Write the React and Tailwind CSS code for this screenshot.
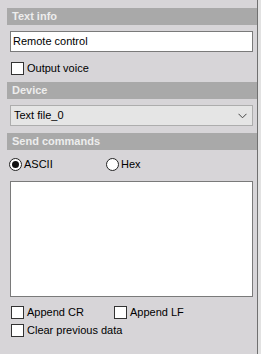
import React from 'react';

// Thanh tiêu đề của từng nhóm
function SectionHeader({ title }) {
  return (
    <div className="h-[17px] bg-[#a9a9a9] text-[#ededed] font-bold pl-[5px] flex items-center leading-none">
      {title}
    </div>
  );
}

function CheckBox({ label, className = '' }) {
  return (
    <div className={`flex items-center h-[13px] ${className}`}>
      <div className="w-[13px] h-[13px] border border-[#333333] bg-white shrink-0" />
      <span className="ml-[3px] leading-none">{label}</span>
    </div>
  );
}

function Radio({ label, checked = false, className = '' }) {
  return (
    <div className={`flex items-center h-[13px] ${className}`}>
      <div className="w-[13px] h-[13px] rounded-full border border-[#222222] bg-white flex items-center justify-center shrink-0">
        {checked && <div className="w-[7px] h-[7px] rounded-full bg-[#111111]" />}
      </div>
      <span className="ml-[2px] leading-none">{label}</span>
    </div>
  );
}

export default function App() {
  return (
    <div className="w-[261px] h-[354px] bg-[#d7d5d8] flex text-[11px] text-black font-['Liberation_Sans',Arial,sans-serif] overflow-hidden">
      <div className="w-[7px] shrink-0" />

      <div className="w-[250px] flex flex-col pt-[8px]">
        <SectionHeader title="Text info" />
        <div className="pl-[3px] pr-[4px] flex flex-col">
          <div className="mt-[6px] h-[21px] border border-[#7a7a7a] bg-white pl-[2px] flex items-center">
            Remote control
          </div>
          <CheckBox label="Output voice" className="mt-[10px] ml-[1px]" />
        </div>

        <div className="mt-[7px]">
          <SectionHeader title="Device" />
        </div>
        <div className="pl-[3px] pr-[4px]">
          <div className="mt-[6px] h-[21px] border border-[#adadad] bg-[#e5e5e5] pl-[3px] pr-[4px] flex items-center justify-between">
            <span>Text file_0</span>
            <svg width="9" height="6" viewBox="0 0 9 6" className="mr-[1px]">
              <path d="M0.5 0.8 L4.5 4.8 L8.5 0.8" fill="none" stroke="#444" strokeWidth="1" />
            </svg>
          </div>
        </div>

        <div className="mt-[7px]">
          <SectionHeader title="Send commands" />
        </div>
        <div className="pl-[2px] pr-[4px] flex flex-col">
          <div className="mt-[8px] flex items-center">
            <Radio label="ASCII" checked className="w-[97px]" />
            <Radio label="Hex" />
          </div>
          <div className="mt-[10px] ml-[1px] h-[116px] border border-[#7a7a7a] bg-white" />
          <div className="mt-[9px] ml-[2px] flex items-center">
            <CheckBox label="Append CR" className="w-[103px]" />
            <CheckBox label="Append LF" />
          </div>
          <CheckBox label="Clear previous data" className="mt-[5px] ml-[2px]" />
        </div>
      </div>

      <div className="w-px bg-[#707070] shrink-0" />
      <div className="w-[3px] bg-[#e2e2e2] shrink-0" />
    </div>
  );
}
